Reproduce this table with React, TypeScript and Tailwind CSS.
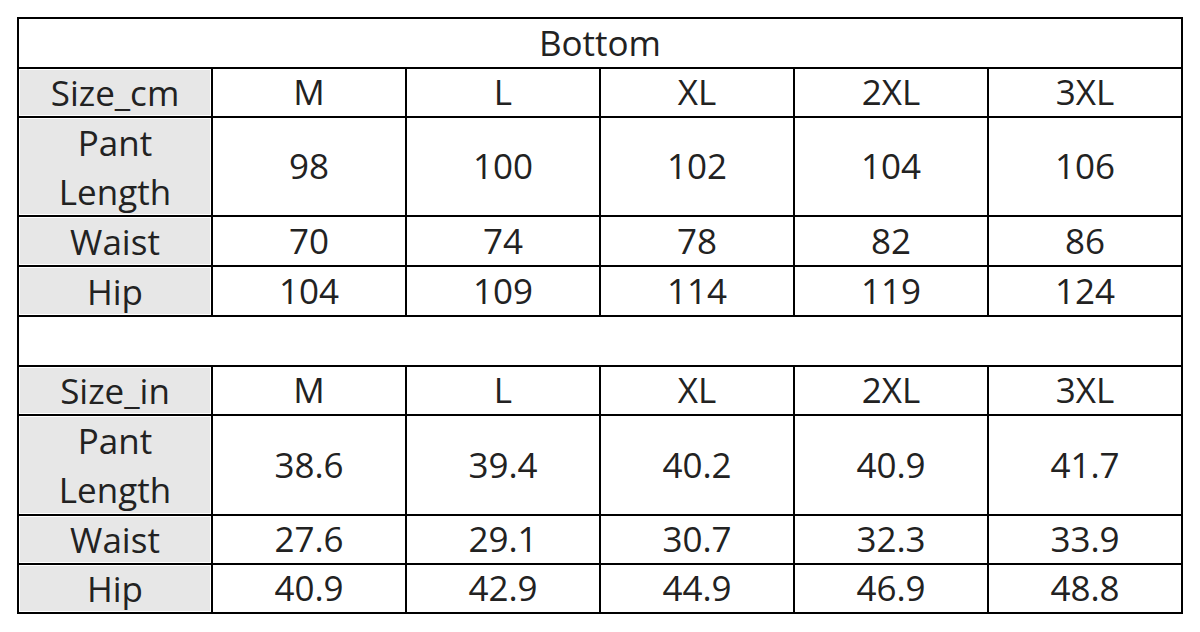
import React from "react";

const sizes = ["M", "L", "XL", "2XL", "3XL"];
const cm = {
  pant: ["98", "100", "102", "104", "106"],
  waist: ["70", "74", "78", "82", "86"],
  hip: ["104", "109", "114", "119", "124"],
};
const inch = {
  pant: ["38.6", "39.4", "40.2", "40.9", "41.7"],
  waist: ["27.6", "29.1", "30.7", "32.3", "33.9"],
  hip: ["40.9", "42.9", "44.9", "46.9", "48.8"],
};

function Label({ children }: { children: React.ReactNode }) {
  return (
    <div className="bg-white p-[1px] flex">
      <div className="flex-1 bg-[#e7e7e7] flex flex-col items-center justify-center leading-[49px]">
        {children}
      </div>
    </div>
  );
}

function Cell({ children }: { children: React.ReactNode }) {
  return <div className="bg-white flex items-center justify-center">{children}</div>;
}

function Block({ unit, data }: { unit: string; data: typeof cm }) {
  return (
    <>
      <Label>{unit}</Label>
      {sizes.map((s) => (
        <Cell key={s}>{s}</Cell>
      ))}
      <Label>
        <span>Pant</span>
        <span>Length</span>
      </Label>
      {data.pant.map((v, i) => (
        <Cell key={"p" + i}>{v}</Cell>
      ))}
      <Label>Waist</Label>
      {data.waist.map((v, i) => (
        <Cell key={"w" + i}>{v}</Cell>
      ))}
      <Label>Hip</Label>
      {data.hip.map((v, i) => (
        <Cell key={"h" + i}>{v}</Cell>
      ))}
    </>
  );
}

export default function App() {
  return (
    <div className="w-[1200px] h-[632px] bg-white pt-[17px] pl-[17px]">
      <div
        className="w-[1166px] grid grid-cols-[repeat(6,192px)] grid-rows-[48px_47px_97px_48px_48px_48px_47px_98px_47px_47px] gap-[2px] p-[2px] bg-black text-[#222222] text-[35px]"
        style={{ fontFamily: '"Open Sans", "Noto Sans", sans-serif' }}
      >
        <div className="col-span-6 bg-white flex items-center justify-center">Bottom</div>
        <Block unit="Size_cm" data={cm} />
        <div className="col-span-6 bg-white" />
        <Block unit="Size_in" data={inch} />
      </div>
    </div>
  );
}
